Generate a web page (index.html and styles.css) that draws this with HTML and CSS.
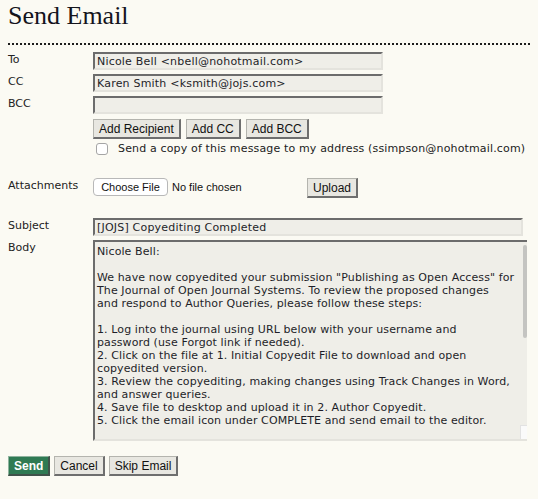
FILE: index.html
```html
<!DOCTYPE html>
<html lang="en">
<head>
<meta charset="utf-8">
<title>Send Email</title>
<link rel="stylesheet" href="styles.css">
</head>
<body>
<h1 class="title">Send Email</h1>
<form class="form">
  <div class="row row-to">
    <label class="label">To</label>
    <input class="text short" type="text" value="Nicole Bell &lt;nbell@nohotmail.com&gt;">
  </div>
  <div class="row row-tight">
    <label class="label">CC</label>
    <input class="text short" type="text" value="Karen Smith &lt;ksmith@jojs.com&gt;">
  </div>
  <div class="row row-tight">
    <label class="label">BCC</label>
    <input class="text short" type="text" value="">
  </div>
  <div class="row row-buttons">
    <span class="label"></span>
    <div class="btn-group">
      <button type="button" class="btn">Add Recipient</button>
      <button type="button" class="btn">Add CC</button>
      <button type="button" class="btn">Add BCC</button>
    </div>
  </div>
  <div class="row row-check">
    <span class="label"></span>
    <label class="check"><span class="box"></span><span class="check-text">Send a copy of this message to my address (ssimpson@nohotmail.com)</span></label>
  </div>
  <div class="row row-attach">
    <label class="label">Attachments</label>
    <div class="file">
      <span class="file-btn">Choose File</span>
      <span class="file-name">No file chosen</span>
    </div>
    <button type="button" class="btn">Upload</button>
  </div>
  <div class="row row-subject">
    <label class="label">Subject</label>
    <input class="text long" type="text" value="[JOJS] Copyediting Completed">
  </div>
  <div class="row row-tight">
    <label class="label">Body</label>
    <div class="body-wrap">
      <textarea class="body-text">Nicole Bell:

We have now copyedited your submission "Publishing as Open Access" for
The Journal of Open Journal Systems. To review the proposed changes
and respond to Author Queries, please follow these steps:

1. Log into the journal using URL below with your username and
password (use Forgot link if needed).
2. Click on the file at 1. Initial Copyedit File to download and open
copyedited version.
3. Review the copyediting, making changes using Track Changes in Word,
and answer queries.
4. Save file to desktop and upload it in 2. Author Copyedit.
5. Click the email icon under COMPLETE and send email to the editor.

URL: http://pkp.sfu.ca/ojs/demo/present/index.php/jojs/author/
submissionEditing/1
Username: nbell

Sam Simpson
Journal of Open Journal Systems
ssimpson@nohotmail.com

______________________________________________________________
The Journal of Open Journal Systems
http://pkp.sfu.ca/ojs/demo/present/index.php/jojs
</textarea>
      <span class="scroll-thumb"></span>
      <span class="scroll-corner"></span>
    </div>
  </div>
  <div class="actions">
    <button type="button" class="btn btn-send">Send</button>
    <button type="button" class="btn">Cancel</button>
    <button type="button" class="btn">Skip Email</button>
  </div>
</form>
</body>
</html>
```
FILE: styles.css
```css
html, body {
  background: #fbfaf3;
}
body {
  margin: 0;
  padding: 2px 8px 0;
  color: #222;
  font-family: "DejaVu Sans", Verdana, sans-serif;
  font-size: 11px;
}
.title {
  margin: 0;
  padding-bottom: 13px;
  border-bottom: 2px dotted #1c1c1c;
  font-family: "Liberation Serif", "Times New Roman", serif;
  font-weight: normal;
  font-size: 26px;
  line-height: 28px;
  color: #14141c;
}
.form {
  display: flex;
  flex-direction: column;
  margin: 7px 0 0;
}
.row {
  display: flex;
  align-items: flex-start;
}
.row-tight { margin-top: 4px; }
.row-buttons { margin-top: 5px; }
.row-check { margin-top: 4px; }
.row-attach { margin-top: 23px; }
.row-subject { margin-top: 20px; }
.label {
  width: 85px;
  flex: none;
  padding-top: 1px;
  line-height: 14px;
  font-family: "DejaVu Sans", Verdana, sans-serif;
  font-size: 11px;
  color: #222;
}
.text {
  box-sizing: border-box;
  height: 18px;
  margin: 0;
  padding: 0 2px;
  border: 2px solid;
  border-color: #6c6c6c #e4e3dd #e4e3dd #6c6c6c;
  background: #efeee8;
  font-family: "DejaVu Sans", Verdana, sans-serif;
  font-size: 11px;
  letter-spacing: 0.2px;
  color: #1e1e28;
  outline: none;
}
.short { width: 290px; }
.long { width: 430px; }
.btn-group {
  display: flex;
  gap: 5px;
}
.btn {
  box-sizing: border-box;
  height: 20px;
  margin: 0;
  padding: 0 5px;
  border-style: solid;
  border-width: 1px 2px 2px 1px;
  border-color: #b4b4ae #6e6e6e #6e6e6e #b4b4ae;
  background: #e8e7e1;
  font-family: "Liberation Sans", Arial, sans-serif;
  font-size: 12px;
  color: #111;
  cursor: pointer;
}
.check {
  display: flex;
  align-items: center;
  height: 12px;
}
.box {
  box-sizing: border-box;
  width: 12px;
  height: 12px;
  margin-left: 3px;
  border: 1px solid #a5a5a5;
  border-radius: 3px;
  background: #fff;
}
.check-text {
  margin-left: 10px;
  font-size: 11px;
  letter-spacing: 0.15px;
  line-height: 12px;
  color: #222;
}
.file {
  width: 210px;
  display: flex;
  align-items: center;
  gap: 4px;
  margin-right: 4px;
}
.file-btn {
  box-sizing: border-box;
  width: 75px;
  height: 18px;
  display: flex;
  align-items: center;
  justify-content: center;
  border: 1px solid #b8b8b8;
  border-radius: 4px;
  background: #fff;
  font-family: "Liberation Sans", Arial, sans-serif;
  font-size: 11px;
  color: #111;
}
.file-name {
  font-family: "Liberation Sans", Arial, sans-serif;
  font-size: 11px;
  color: #111;
}
.body-wrap {
  position: relative;
  width: 434px;
  height: 201px;
}
.body-text {
  box-sizing: border-box;
  width: 434px;
  height: 201px;
  margin: 0;
  padding: 3px 8px 3px 2px;
  border-style: solid;
  border-width: 2px 0 2px 2px;
  border-color: #6c6c6c #e4e3dd #e4e3dd #6c6c6c;
  background: #efeee8;
  font-family: "DejaVu Sans", Verdana, sans-serif;
  font-size: 11px;
  letter-spacing: 0.1px;
  line-height: 13px;
  color: #1e1e28;
  resize: none;
  outline: none;
  overflow-y: auto;
  white-space: pre-wrap;
}
.body-text::-webkit-scrollbar {
  width: 0;
}
.scroll-thumb {
  position: absolute;
  right: 0;
  top: 5px;
  width: 4px;
  height: 93px;
  border-radius: 2px;
  background: #c4c4c1;
}
.scroll-corner {
  position: absolute;
  right: 0;
  bottom: 2px;
  width: 7px;
  height: 14px;
  box-sizing: border-box;
  border-top: 1px solid #e2e2e2;
  border-left: 1px solid #e2e2e2;
  background: #fafafa;
}
.actions {
  display: flex;
  gap: 4px;
  margin-top: 15px;
}
.btn-send {
  background: #2f7a53;
  color: #fff;
  font-weight: bold;
  border-color: #8fb39e #40524a #40524a #8fb39e;
}
```
